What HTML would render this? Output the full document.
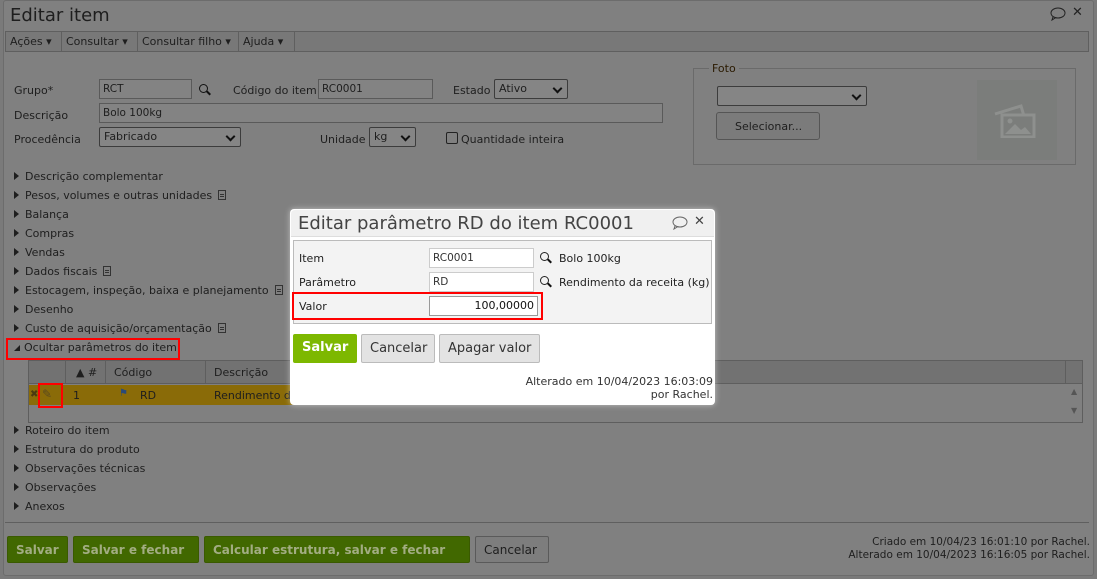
<!DOCTYPE html>
<html><head><meta charset="utf-8"><style>
*{box-sizing:border-box;margin:0;padding:0}
body{width:1097px;height:579px;overflow:hidden;background:#7a7a7a;font-family:"DejaVu Sans","Liberation Sans",sans-serif;font-size:10.5px;color:#1e1e1e;position:relative}
.a{position:absolute;white-space:nowrap}
.win{position:absolute;left:3px;top:0;width:1091px;height:576px;background:#808080;border:1px solid #6c6c6c;border-radius:3px}
.inp{position:absolute;border:1px solid #5a5a5a;background:#838383;height:20px;padding:0 3px;line-height:18px;font-size:10.5px}
.sel{position:absolute;border:1px solid #3c3c3c;background:#858585;height:20px;padding:0 4px;line-height:18px;font-size:11px;border-radius:2px}
.sel:after{content:"";position:absolute;right:6px;top:5px;width:5px;height:5px;border-right:2px solid #111;border-bottom:2px solid #111;transform:rotate(45deg)}
.tri{display:inline-block;width:0;height:0;border-top:4px solid transparent;border-bottom:4px solid transparent;border-left:5px solid #1e1e1e;margin-right:6px;vertical-align:0}
.sec{position:absolute;left:14px;font-size:11px}
.doc{display:inline-block;width:8px;height:10px;border:1px solid #333;margin-left:6px;vertical-align:-1px;background:linear-gradient(#333,#333) 1px 3px/4px 1px no-repeat,linear-gradient(#333,#333) 1px 5px/4px 1px no-repeat}
.btn{position:absolute;top:536px;height:27px;border-radius:2px;font-size:12px;font-weight:bold;padding:6px 8px;color:#a2ad82;background:#416800;border:1px solid #3a5a00}
.red{position:absolute;border:2px solid #f00}
.mag{position:absolute;width:9px;height:9px;border:1.5px solid #111;border-radius:50%}
.mag:after{content:"";position:absolute;left:6px;top:7px;width:5px;height:2px;background:#111;transform:rotate(45deg)}
</style></head><body>
<div class="win"></div>
<div class="a" style="left:10px;top:5px;font-size:18px;color:#1e1e1e">Editar item</div>
<svg class="a" style="left:1050px;top:7px" width="16" height="14"><ellipse cx="8" cy="6" rx="7" ry="5" fill="none" stroke="#222" stroke-width="1"/><path d="M3 10 L2 13 L6 10.5" fill="none" stroke="#222"/></svg>
<div class="a" style="left:1072px;top:5px;font-size:13px;font-weight:bold;color:#222">✕</div>
<div class="a" style="left:5px;top:31px;width:1084px;height:21px;background:#787878;border:1px solid #5f5f5f"></div>
<div class="a" style="left:10px;top:35px;font-size:11px">Ações ▾</div>
<div class="a" style="left:61px;top:32px;height:19px;border-left:1px solid #5f5f5f"></div>
<div class="a" style="left:66px;top:35px;font-size:11px">Consultar ▾</div>
<div class="a" style="left:137px;top:32px;height:19px;border-left:1px solid #5f5f5f"></div>
<div class="a" style="left:142px;top:35px;font-size:11px">Consultar filho ▾</div>
<div class="a" style="left:238px;top:32px;height:19px;border-left:1px solid #5f5f5f"></div>
<div class="a" style="left:243px;top:35px;font-size:11px">Ajuda ▾</div>
<div class="a" style="left:294px;top:32px;height:19px;border-left:1px solid #5f5f5f"></div>

<div class="a" style="left:14px;top:84px;font-size:11px">Grupo*</div>
<div class="inp" style="left:99px;top:79px;width:93px">RCT</div>
<div class="mag" style="left:199px;top:84px"></div>
<div class="a" style="left:233px;top:84px;font-size:11px">Código do item</div>
<div class="inp" style="left:318px;top:79px;width:115px">RC0001</div>
<div class="a" style="left:453px;top:84px;font-size:11px">Estado</div>
<div class="sel" style="left:494px;top:79px;width:74px">Ativo</div>
<div class="a" style="left:14px;top:109px;font-size:11px">Descrição</div>
<div class="inp" style="left:99px;top:103px;width:564px">Bolo 100kg</div>
<div class="a" style="left:14px;top:133px;font-size:11px">Procedência</div>
<div class="sel" style="left:99px;top:127px;width:142px">Fabricado</div>
<div class="a" style="left:320px;top:133px;font-size:11px">Unidade</div>
<div class="sel" style="left:369px;top:127px;width:47px">kg</div>
<div class="a" style="left:446px;top:132px;width:12px;height:12px;border:1px solid #222;border-radius:2px"></div>
<div class="a" style="left:461px;top:133px;font-size:11px">Quantidade inteira</div>

<div class="a" style="left:693px;top:68px;width:383px;height:97px;border:1px solid #6a6a6a"></div>
<div class="a" style="left:709px;top:62px;background:#808080;padding:0 3px;font-size:11px;color:#2a1a00">Foto</div>
<div class="sel" style="left:717px;top:86px;width:150px"></div>
<div class="a" style="left:716px;top:112px;width:104px;height:28px;border:1px solid #555;border-radius:3px;background:#7b7b7b;font-size:11px;padding:7px 0 0 18px">Selecionar...</div>
<div class="a" style="left:977px;top:80px;width:80px;height:80px;background:#7b7d7b"></div>
<svg class="a" style="left:993px;top:102px" width="45" height="36"><path d="M2 12 L28 4 L31 14" fill="none" stroke="#8e908e" stroke-width="3"/><rect x="9" y="13" width="32" height="22" fill="none" stroke="#8e908e" stroke-width="3"/><path d="M12 32 L22 22 L28 28 L32 25 L38 32Z" fill="#8e908e"/><circle cx="17" cy="19" r="2.5" fill="#8e908e"/></svg>

<div class="sec" style="top:170px"><span class="tri"></span>Descrição complementar</div>
<div class="sec" style="top:189px"><span class="tri"></span>Pesos, volumes e outras unidades<span class="doc"></span></div>
<div class="sec" style="top:208px"><span class="tri"></span>Balança</div>
<div class="sec" style="top:227px"><span class="tri"></span>Compras</div>
<div class="sec" style="top:246px"><span class="tri"></span>Vendas</div>
<div class="sec" style="top:265px"><span class="tri"></span>Dados fiscais<span class="doc"></span></div>
<div class="sec" style="top:284px"><span class="tri"></span>Estocagem, inspeção, baixa e planejamento<span class="doc"></span></div>
<div class="sec" style="top:303px"><span class="tri"></span>Desenho</div>
<div class="sec" style="top:322px"><span class="tri"></span>Custo de aquisição/orçamentação<span class="doc"></span></div>
<div class="sec" style="top:341px"><span style="display:inline-block;border-left:6px solid transparent;border-bottom:6px solid #1e1e1e;margin-right:4px"></span>Ocultar parâmetros do item</div>
<div class="red" style="left:6px;top:338px;width:174px;height:22px"></div>

<div class="a" style="left:28px;top:360px;width:1055px;height:63px;border:1px solid #5e5e5e;background:#808080"></div>
<div class="a" style="left:29px;top:361px;width:1053px;height:23px;background:#727272;border-bottom:1px solid #5e5e5e"></div>
<div class="a" style="left:65px;top:361px;height:23px;border-left:1px solid #5e5e5e"></div>
<div class="a" style="left:105px;top:361px;height:23px;border-left:1px solid #5e5e5e"></div>
<div class="a" style="left:205px;top:361px;height:23px;border-left:1px solid #5e5e5e"></div>
<div class="a" style="left:1065px;top:361px;height:23px;border-left:1px solid #5e5e5e"></div>
<div class="a" style="left:76px;top:366px;font-size:11px">▲ #</div>
<div class="a" style="left:114px;top:366px;font-size:11px">Código</div>
<div class="a" style="left:214px;top:366px;font-size:11px">Descrição</div>
<div class="a" style="left:29px;top:385px;width:270px;height:20px;background:#8a6b08"></div>
<div class="a" style="left:30px;top:389px;font-size:10px;color:#4a3a10">✖</div>
<div class="a" style="left:42px;top:387px;font-size:12px;color:#5a4a20">✎</div>
<div class="red" style="left:38px;top:383px;width:25px;height:25px"></div>
<div class="a" style="left:73px;top:389px;font-size:11px">1</div>
<div class="a" style="left:119px;top:388px;font-size:10px;color:#2a4a7a">⚑</div>
<div class="a" style="left:140px;top:389px;font-size:11px">RD</div>
<div class="a" style="left:214px;top:389px;font-size:11px">Rendimento d</div>
<div class="a" style="left:1071px;top:387px;font-size:8px;color:#555">▲</div>
<div class="a" style="left:1071px;top:406px;font-size:8px;color:#555">▼</div>

<div class="sec" style="top:424px"><span class="tri"></span>Roteiro do item</div>
<div class="sec" style="top:443px"><span class="tri"></span>Estrutura do produto</div>
<div class="sec" style="top:462px"><span class="tri"></span>Observações técnicas</div>
<div class="sec" style="top:481px"><span class="tri"></span>Observações</div>
<div class="sec" style="top:500px"><span class="tri"></span>Anexos</div>
<div class="a" style="left:5px;top:522px;width:1084px;border-top:1px solid #5f5f5f"></div>

<div class="btn" style="left:7px;width:61px">Salvar</div>
<div class="btn" style="left:73px;width:126px">Salvar e fechar</div>
<div class="btn" style="left:204px;width:266px">Calcular estrutura, salvar e fechar</div>
<div class="btn" style="left:475px;width:74px;background:#7d7d7d;border-color:#5a5a5a;color:#1e1e1e;font-weight:normal">Cancelar</div>
<div class="a" style="right:7px;top:536px;font-size:10.5px;text-align:right;line-height:13px">Criado em 10/04/23 16:01:10 por Rachel.<br>Alterado em 10/04/2023 16:16:05 por Rachel.</div>

<div class="a" style="left:290px;top:209px;width:425px;height:196px;background:#fff;border-radius:4px;box-shadow:0 0 6px rgba(255,255,255,.5)"></div>
<div class="a" style="left:291px;top:210px;width:423px;height:27px;background:#f0f0f0;border-bottom:1px solid #ddd;border-radius:4px 4px 0 0"></div>
<div class="a" style="left:298px;top:213px;font-size:18px;color:#444">Editar parâmetro RD do item RC0001</div>
<svg class="a" style="left:672px;top:216px" width="16" height="14"><ellipse cx="8" cy="6" rx="7" ry="5" fill="none" stroke="#666"/><path d="M3 10 L2 13 L6 10.5" fill="none" stroke="#666"/></svg>
<div class="a" style="left:694px;top:214px;font-size:13px;font-weight:bold;color:#444">✕</div>
<div class="a" style="left:293px;top:240px;width:419px;height:84px;border:1px solid #bbb;background:#f3f3f3"></div>
<div class="a" style="left:299px;top:252px;font-size:11px;color:#222">Item</div>
<div class="inp" style="left:429px;top:248px;width:105px;background:#fff;border-color:#ccc;color:#333">RC0001</div>
<div class="mag" style="left:540px;top:252px;border-color:#222"></div>
<div class="a" style="left:559px;top:252px;font-size:11px;color:#222">Bolo 100kg</div>
<div class="a" style="left:299px;top:276px;font-size:11px;color:#222">Parâmetro</div>
<div class="inp" style="left:429px;top:272px;width:105px;background:#fff;border-color:#ccc;color:#333">RD</div>
<div class="mag" style="left:540px;top:276px;border-color:#222"></div>
<div class="a" style="left:559px;top:276px;font-size:11px;color:#222">Rendimento da receita (kg)</div>
<div class="red" style="left:292px;top:292px;width:251px;height:28px"></div>
<div class="a" style="left:299px;top:300px;font-size:11px;color:#222">Valor</div>
<div class="inp" style="left:429px;top:296px;width:109px;background:#fff;border-color:#999;text-align:right;color:#111;font-size:11px">100,00000</div>
<div class="a" style="left:293px;top:334px;width:64px;height:29px;background:#7db800;border-radius:2px;color:#fff;font-weight:bold;font-size:13px;padding:6px 0 0 9px">Salvar</div>
<div class="a" style="left:361px;top:334px;width:74px;height:29px;background:#e3e3e3;border:1px solid #bbb;border-radius:2px;color:#333;font-size:13px;padding:6px 0 0 8px">Cancelar</div>
<div class="a" style="left:439px;top:334px;width:101px;height:29px;background:#e3e3e3;border:1px solid #bbb;border-radius:2px;color:#333;font-size:13px;padding:6px 0 0 8px">Apagar valor</div>
<div class="a" style="right:384px;top:375px;font-size:11px;color:#333;text-align:right;line-height:13px">Alterado em 10/04/2023 16:03:09<br>por Rachel.</div>
</body></html>
